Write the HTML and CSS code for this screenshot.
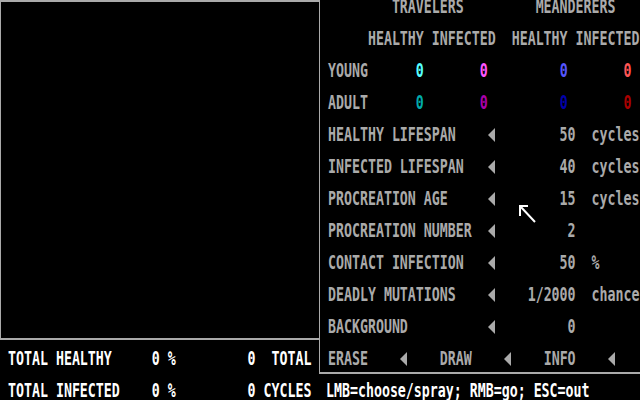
FILE: index.html
```html
<!DOCTYPE html>
<html>
<head>
<meta charset="utf-8">
<link rel="stylesheet" href="styles.css">
</head>
<body>
<div class="screen">
  <div class="left">
    <div class="viewport"></div>
    <div class="stats">
      <div class="line white"> TOTAL HEALTHY     0 %         0  TOTAL</div>
      <div class="line white"> TOTAL INFECTED    0 %         0 CYCLES</div>
    </div>
  </div>
  <div class="right">
    <div class="panel">
      <div class="line">         TRAVELERS         MEANDERERS</div>
      <div class="line">      HEALTHY INFECTED  HEALTHY INFECTED</div>
      <div class="line"> YOUNG      <span class="c-cyan">0</span>       <span class="c-magenta">0</span>         <span class="c-blue">0</span>       <span class="c-red">0</span></div>
      <div class="line"> ADULT      <span class="c-dcyan">0</span>       <span class="c-dmagenta">0</span>         <span class="c-dblue">0</span>       <span class="c-dred">0</span></div>
      <div class="line"> HEALTHY LIFESPAN    <svg class="arr" viewBox="0 0 8 16"><polygon points="0,7.75 7,2.9 7,12.6"/></svg>        50  cycles</div>
      <div class="line"> INFECTED LIFESPAN   <svg class="arr" viewBox="0 0 8 16"><polygon points="0,7.75 7,2.9 7,12.6"/></svg>        40  cycles</div>
      <div class="line"> PROCREATION AGE     <svg class="arr" viewBox="0 0 8 16"><polygon points="0,7.75 7,2.9 7,12.6"/></svg>        15  cycles</div>
      <div class="line"> PROCREATION NUMBER  <svg class="arr" viewBox="0 0 8 16"><polygon points="0,7.75 7,2.9 7,12.6"/></svg>         2</div>
      <div class="line"> CONTACT INFECTION   <svg class="arr" viewBox="0 0 8 16"><polygon points="0,7.75 7,2.9 7,12.6"/></svg>        50  %</div>
      <div class="line"> DEADLY MUTATIONS    <svg class="arr" viewBox="0 0 8 16"><polygon points="0,7.75 7,2.9 7,12.6"/></svg>    1/2000  chance</div>
      <div class="line"> BACKGROUND          <svg class="arr" viewBox="0 0 8 16"><polygon points="0,7.75 7,2.9 7,12.6"/></svg>         0</div>
      <div class="line"> ERASE    <svg class="arr" viewBox="0 0 8 16"><polygon points="0,7.75 7,2.9 7,12.6"/></svg>    DRAW    <svg class="arr" viewBox="0 0 8 16"><polygon points="0,7.75 7,2.9 7,12.6"/></svg>    INFO    <svg class="arr" viewBox="0 0 8 16"><polygon points="0,7.75 7,2.9 7,12.6"/></svg></div>
    </div>
    <div class="line white status"> LMB=choose/spray; RMB=go; ESC=out</div>
  </div>
</div>
<svg class="cursor" viewBox="0 0 18 20" width="18" height="20"><path d="M2 12 V2 H10 M2 2 L17 18" fill="none" stroke="#fff" stroke-width="2"/></svg>
</body>
</html>
```
FILE: styles.css
```css
html, body {
  margin: 0;
  padding: 0;
  background: #000;
}
body {
  width: 640px;
  height: 400px;
  overflow: hidden;
  position: relative;
  font-family: "DejaVu Sans Mono", "Liberation Mono", monospace;
  font-weight: bold;
  font-size: 13.288px;
  color: #aaaaaa;
}
.screen {
  display: flex;
  width: 640px;
  height: 400px;
}
.left {
  width: 319px;
  display: flex;
  flex-direction: column;
}
.viewport {
  height: 340px;
  box-sizing: border-box;
  border-top: 2px solid #aaaaaa;
  border-left: 1px solid #aaaaaa;
  border-bottom: 2px solid #aaaaaa;
}
.stats {
  padding-top: 12px;
  display: flex;
  flex-direction: column;
  gap: 16px;
}
.right {
  width: 321px;
  display: flex;
  flex-direction: column;
}
.panel {
  height: 374px;
  box-sizing: border-box;
  border-left: 1px solid #aaaaaa;
  border-bottom: 2px solid #aaaaaa;
  display: flex;
  flex-direction: column;
  gap: 16px;
}
.line {
  height: 16px;
  line-height: 16px;
  white-space: pre;
  transform: scaleY(1.443);
  transform-origin: 50% 9.45px;
}
.status {
  margin-top: 10px;
  margin-left: -1px;
}
.white { color: #ffffff; }
.arr {
  width: 8px;
  height: 16px;
  vertical-align: top;
  fill: #aaaaaa;
}
.c-cyan { color: #55ffff; }
.c-magenta { color: #ff55ff; }
.c-blue { color: #5555ff; }
.c-red { color: #ff5555; }
.c-dcyan { color: #00aaaa; }
.c-dmagenta { color: #aa00aa; }
.c-dblue { color: #0000aa; }
.c-dred { color: #aa0000; }
.cursor {
  position: absolute;
  left: 518px;
  top: 204px;
}
```
